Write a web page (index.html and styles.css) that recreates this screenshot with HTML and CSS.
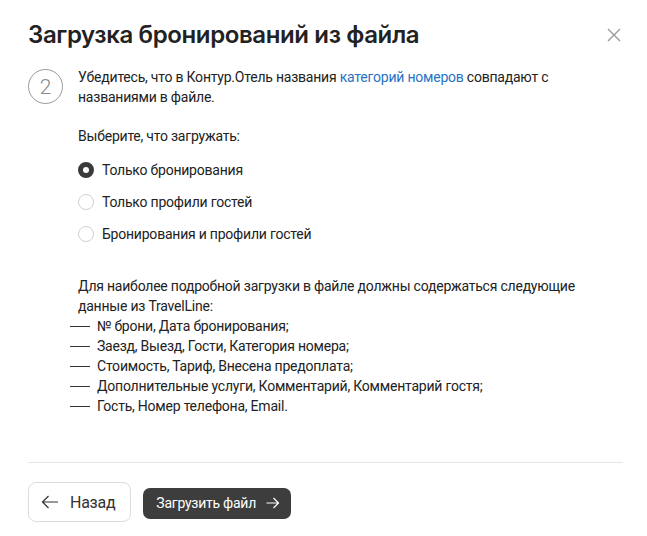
FILE: index.html
```html
<!DOCTYPE html>
<html lang="ru">
<head>
    <meta charset="UTF-8">
    <meta name="viewport" content="width=device-width, initial-scale=1.0">
    <title>Загрузка бронирований из файла</title>
    <link rel="stylesheet" href="styles.css">
</head>
<body>
    <div class="modal">
        <div class="modal-header">
            <h1 class="modal-title">Загрузка бронирований из файла</h1>
            <button class="close-btn" aria-label="Закрыть">
                <svg width="14" height="14" viewBox="0 0 14 14"><path d="M1 1 L13 13 M13 1 L1 13" stroke="#9a9a9a" stroke-width="1.4" fill="none"/></svg>
            </button>
        </div>

        <div class="step">
            <div class="step-num">2</div>
            <div class="step-body">
                <p class="step-text">Убедитесь, что в Контур.Отель названия <a href="#" class="link">категорий номеров</a> совпадают с названиями в файле.</p>

                <p class="choose-label">Выберите, что загружать:</p>

                <div class="radio-group">
                    <label class="radio">
                        <span class="radio-box checked"></span>
                        <span>Только бронирования</span>
                    </label>
                    <label class="radio">
                        <span class="radio-box"></span>
                        <span>Только профили гостей</span>
                    </label>
                    <label class="radio">
                        <span class="radio-box"></span>
                        <span>Бронирования и профили гостей</span>
                    </label>
                </div>

                <p class="info">Для наиболее подробной загрузки в файле должны содержаться следующие данные из TravelLine:</p>
                <ul class="fields">
                    <li>№ брони, Дата бронирования;</li>
                    <li>Заезд, Выезд, Гости, Категория номера;</li>
                    <li>Стоимость, Тариф, Внесена предоплата;</li>
                    <li>Дополнительные услуги, Комментарий, Комментарий гостя;</li>
                    <li>Гость, Номер телефона, Email.</li>
                </ul>
            </div>
        </div>

        <div class="modal-footer">
            <button class="btn btn-back">
                <svg width="18" height="14" viewBox="0 0 18 14"><path d="M17 7 H1.5 M7.5 1 L1.5 7 L7.5 13" stroke="#333" stroke-width="1.2" fill="none"/></svg>
                Назад
            </button>
            <button class="btn btn-primary">
                Загрузить файл
                <svg width="14" height="12" viewBox="0 0 14 12"><path d="M0.5 6 H12.5 M7.5 1 L12.5 6 L7.5 11" stroke="#fff" stroke-width="1.2" fill="none"/></svg>
            </button>
        </div>
    </div>
</body>
</html>
```

FILE: styles.css
```css
* {
    margin: 0;
    padding: 0;
    box-sizing: border-box;
}

body {
    font-family: 'Roboto', 'Liberation Sans', sans-serif;
    background: #fff;
    color: #222;
    font-size: 14px;
    line-height: 20px;
    letter-spacing: -0.22px;
}

.modal {
    width: 647px;
    padding: 20px 24px 0 28px;
}

.modal-header {
    display: flex;
    justify-content: space-between;
    align-items: center;
}

.modal-title {
    font-family: 'Inter', sans-serif;
    font-size: 24px;
    font-weight: 600;
    line-height: 30px;
    color: #222;
    letter-spacing: -0.38px;
}

.close-btn {
    background: none;
    border: none;
    width: 14px;
    height: 14px;
    margin-right: 2px;
    display: flex;
}

.step {
    display: flex;
    gap: 15px;
    margin-top: 17px;
}

.step-num {
    width: 35px;
    height: 35px;
    flex-shrink: 0;
    border: 1px solid #9a9a9a;
    border-radius: 50%;
    display: flex;
    align-items: center;
    justify-content: center;
    font-size: 21px;
    font-weight: 300;
    color: #8a8a8a;
    margin-top: 2px;
}

.step-body {
    padding-right: 30px;
}

.link {
    color: #2a73c4;
    text-decoration: none;
}

.choose-label {
    margin-top: 19px;
}

.radio-group {
    display: flex;
    flex-direction: column;
    gap: 12px;
    margin-top: 14px;
}

.radio {
    display: flex;
    align-items: center;
    gap: 8px;
}

.radio-box {
    width: 16px;
    height: 16px;
    border: 1px solid #d0d0d0;
    border-radius: 50%;
    flex-shrink: 0;
}

.radio-box.checked {
    border: 5px solid #3a3a3a;
    background: #fff;
}

.info {
    margin-top: 32px;
}

.fields {
    list-style: none;
    margin-left: -8px;
}

.fields li {
    display: flex;
    gap: 7px;
}

.fields li::before {
    content: '';
    width: 20px;
    height: 1px;
    background: #333;
    margin-top: 10px;
    flex-shrink: 0;
}

.modal-footer {
    margin-top: 46px;
    border-top: 1px solid #e6e6e6;
    padding-top: 19px;
    display: flex;
    align-items: center;
    gap: 12px;
}

.btn {
    display: flex;
    align-items: center;
    font-family: inherit;
    letter-spacing: -0.25px;
    cursor: pointer;
}

.btn-back {
    height: 40px;
    padding: 0 15px 0 12px;
    gap: 11px;
    background: #fff;
    border: 1px solid #dcdcdc;
    border-radius: 8px;
    font-size: 16px;
    color: #333;
}

.btn-primary {
    height: 31px;
    padding: 0 11px 0 13px;
    gap: 10px;
    background: #3d3d3d;
    border: none;
    border-radius: 7px;
    font-size: 14px;
    color: #fff;
    margin-top: 2px;
}
```
